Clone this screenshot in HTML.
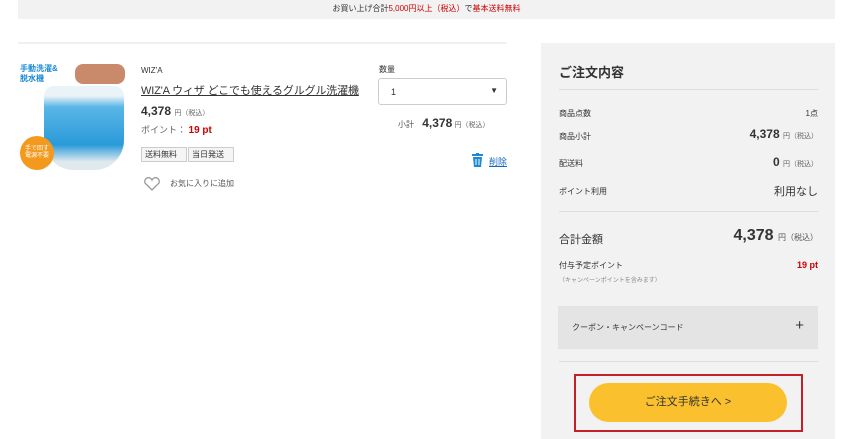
<!DOCTYPE html>
<html><head><meta charset="utf-8"><style>
*{margin:0;padding:0;box-sizing:border-box}
body{width:847px;height:439px;overflow:hidden;background:#fff;font-family:"Liberation Sans","Noto Sans CJK JP",sans-serif;color:#333;position:relative}
.a{position:absolute;white-space:nowrap}
.s{font-size:9px}.r{color:#c00}
.sm{font-size:7px;color:#666}
</style></head><body>
<div class="a" style="left:18px;top:0;width:817px;height:19px;background:#f2f2f2;font-size:8px;text-align:center;line-height:17px">お買い上げ合計<span class="r">5,000円以上（税込）</span>で<span class="r">基本送料無料</span></div>
<div class="a" style="left:18px;top:42px;width:489px;height:2px;background:#f0f0f0"></div>
<div class="a" style="left:20px;top:64px;width:106px;height:106px;overflow:hidden">
 <div class="a" style="left:24px;top:22px;width:80px;height:84px;border-radius:10px 10px 30px 30px;background:linear-gradient(#e9f3f8 0%,#e9f3f8 12%,#5ab6e6 25%,#2a9ad9 70%,#dfe9ee 90%)"></div>
 <div class="a" style="left:55px;top:0;width:50px;height:20px;background:#c98a6b;border-radius:8px"></div>
 <div class="a" style="left:0;top:0;font-size:8px;font-weight:bold;color:#1a8ad6;line-height:10px">手動洗濯&amp;<br>脱水機</div>
 <div class="a" style="left:0;top:72px;width:34px;height:34px;border-radius:50%;background:#f39a1e;color:#fff;font-size:6px;text-align:center;padding-top:10px;line-height:7px">手で回す<br>電源不要</div>
</div>
<div class="a s" style="left:141px;top:66px;font-size:8px">WIZ'A</div>
<div class="a" style="left:141px;top:82px;font-size:11px;letter-spacing:-0.15px;text-decoration:underline">WIZ'A ウィザ どこでも使えるグルグル洗濯機</div>
<div class="a" style="left:141px;top:104px;font-size:12px;font-weight:bold">4,378 <span class="sm" style="font-weight:normal">円（税込）</span></div>
<div class="a s" style="left:141px;top:123px;color:#666">ポイント： <b class="r" style="font-size:10px">19 pt</b></div>
<div class="a" style="left:141px;top:147px;width:46px;font-size:8px;border:1px solid #ccc;background:#f5f5f5;padding:1px 3px">送料無料</div>
<div class="a" style="left:188px;top:147px;width:46px;font-size:8px;border:1px solid #ccc;background:#f5f5f5;padding:1px 3px">当日発送</div>
<svg class="a" style="left:143px;top:176px" width="18" height="16"><path d="M9 14 L2 7 A3.5 3.5 0 0 1 9 4 A3.5 3.5 0 0 1 16 7 Z" fill="none" stroke="#999" stroke-width="1.3"/></svg>
<div class="a" style="left:170px;top:178px;font-size:8px;color:#555">お気に入りに追加</div>
<div class="a s" style="left:379px;top:64px;font-size:8px">数量</div>
<div class="a" style="left:378px;top:78px;width:129px;height:27px;border:1px solid #ccc;border-radius:3px;font-size:9px;padding:8px 12px">1<span style="position:absolute;right:8px;top:7px;font-size:8px">▼</span></div>
<div class="a" style="left:398px;top:116px;font-size:8px;color:#555">小計 <b style="font-size:12px;color:#333;margin-left:6px">4,378</b> <span class="sm">円（税込）</span></div>
<svg class="a" style="left:472px;top:153px" width="11" height="14"><rect x="0" y="1" width="11" height="2" fill="#1a8ad6"/><rect x="4" y="0" width="3" height="2" fill="#1a8ad6"/><path d="M1 4 H10 L9 14 H2 Z" fill="#1a8ad6"/><path d="M4 6V12M7 6V12" stroke="#fff"/></svg>
<div class="a" style="left:489px;top:155px;font-size:9px;color:#1a6ac0;text-decoration:underline">削除</div>
<div class="a" style="left:541px;top:43px;width:294px;height:396px;background:#f2f2f2"></div>
<div class="a" style="left:559px;top:62px;font-size:13px;font-weight:bold">ご注文内容</div>
<div class="a" style="left:559px;top:89px;width:259px;height:1px;background:#ddd"></div>
<div class="a" style="left:559px;top:108px;font-size:8px">商品点数</div><div class="a" style="right:29px;top:108px;font-size:8px">1点</div>
<div class="a" style="left:559px;top:131px;font-size:8px">商品小計</div><div class="a" style="right:29px;top:127px;font-size:12px;font-weight:bold">4,378 <span class="sm" style="font-weight:normal">円（税込）</span></div>
<div class="a" style="left:559px;top:158px;font-size:8px">配送料</div><div class="a" style="right:29px;top:155px;font-size:12px;font-weight:bold">0 <span class="sm" style="font-weight:normal">円（税込）</span></div>
<div class="a" style="left:559px;top:186px;font-size:8px">ポイント利用</div><div class="a" style="right:29px;top:183px;font-size:11px">利用なし</div>
<div class="a" style="left:559px;top:211px;width:259px;height:1px;background:#ddd"></div>
<div class="a" style="left:559px;top:231px;font-size:11px">合計金額</div><div class="a" style="right:29px;top:227px;font-size:16px;font-weight:bold">4,378 <span style="font-size:8px;font-weight:normal;color:#555">円（税込）</span></div>
<div class="a" style="left:559px;top:260px;font-size:8px">付与予定ポイント</div><div class="a r" style="right:29px;top:260px;font-size:9px;font-weight:bold">19 pt</div>
<div class="a" style="left:559px;top:275px;font-size:6px;color:#888">（キャンペーンポイントを含みます）</div>
<div class="a" style="left:558px;top:306px;width:260px;height:43px;background:#e4e4e4;font-size:8px;padding:16px 14px">クーポン・キャンペーンコード<span style="position:absolute;right:14px;top:11px;font-size:15px">+</span></div>
<div class="a" style="left:559px;top:361px;width:259px;height:1px;background:#ddd"></div>
<div class="a" style="left:574px;top:374px;width:229px;height:58px;border:2px solid #c4202a"></div>
<div class="a" style="left:589px;top:383px;width:198px;height:39px;border-radius:20px;background:#fbc02d;font-size:11px;text-align:center;line-height:39px;color:#333">ご注文手続きへ &gt;</div>
</body></html>
